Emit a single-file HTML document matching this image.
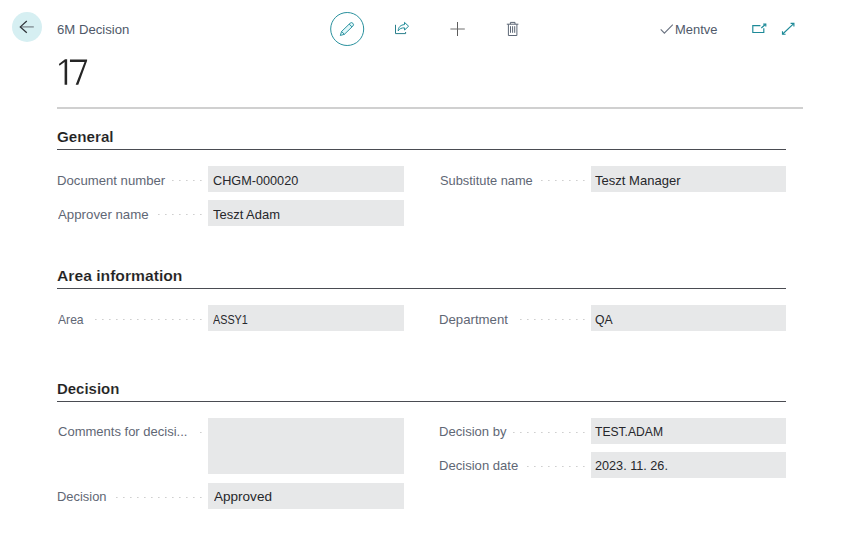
<!DOCTYPE html>
<html>
<head>
<meta charset="utf-8">
<title>6M Decision</title>
<style>
html,body{margin:0;padding:0;background:#fff;}
body{width:859px;height:541px;position:relative;overflow:hidden;font-family:"Liberation Sans",sans-serif;font-size:13px;color:#212121;}
svg{position:absolute;left:0;top:0;}
.t{position:absolute;white-space:nowrap;transform-origin:0 50%;height:26px;line-height:26px;font-size:13px;}
.cap{height:18px;line-height:18px;color:#4f5969;}
.h{height:20px;line-height:20px;font-size:15px;font-weight:bold;color:#1f1f1f;-webkit-text-stroke:0.12px #fff;}
.lab{color:#5f6775;}
.val{color:#26272b;}
.hr{position:absolute;left:57px;top:107px;width:746px;height:2px;background:#d0d0d0;}
.sec{position:absolute;left:57px;width:729px;height:1px;background:#4a4c52;}
.box{position:absolute;background:#e7e8e9;}
.dots{position:absolute;height:1px;background-image:linear-gradient(90deg,#cfcfcf 0,#cfcfcf 1px,#e2e2e2 1px,#e2e2e2 2px,transparent 2px);background-size:7px 1px;background-repeat:repeat-x;}
</style>
</head>
<body>
<svg width="859" height="110" viewBox="0 0 859 110">
  <!-- back button -->
  <circle cx="27" cy="27" r="15" fill="#d6eff2"/>
  <path d="M33.8 26.9 H20.6" stroke="#7f8a90" stroke-width="1.3" fill="none"/>
  <path d="M26.8 21 L20.3 26.9 L26.8 32.8" stroke="#30343a" stroke-width="1.25" fill="none" stroke-linejoin="miter"/>

  <!-- title 17 -->
  <polygon points="65.0,59.2 67.15,59.2 67.15,84.8 64.6,84.8 64.6,62.0 59.5,65.8 58.9,63.9" fill="#252525"/>
  <polygon points="69.95,59.6 87.1,59.6 87.1,60.8 78.3,84.8 75.7,84.8 84.5,61.9 69.95,61.9" fill="#252525"/>

  <!-- edit (pencil in circle) -->
  <circle cx="347.2" cy="29" r="16.5" fill="none" stroke="#1d8a98" stroke-width="0.95"/>
  <g transform="translate(347,29) rotate(-44)" fill="#e0f7fa" stroke="#1d8a98" stroke-width="0.85" stroke-linejoin="round">
    <path d="M-9.3 0 L-5.6 -2 L6.2 -2 A2 2 0 0 1 6.2 2 L-5.6 2 Z"/>
    <path d="M-5.6 -2 L-5.6 2 M5 -2 L5 2" fill="none"/>
  </g>

  <!-- share -->
  <path d="M395.5 24.8 V33.6 H405.6 V32" fill="none" stroke="#2a7f8c" stroke-width="1"/>
  <path d="M404.5 22.4 L408.6 26.2 L404.6 30 L404.6 27.9 C401.4 27.7 399.6 28.7 398.2 30.9 C398.3 27.2 400.5 24.9 404.5 24.6 Z" fill="none" stroke="#1d8a98" stroke-width="1" stroke-linejoin="round"/>

  <!-- plus -->
  <path d="M457.5 22 V36" stroke="#5c5c5c" stroke-width="1" fill="none"/>
  <path d="M450.4 29 H464.8" stroke="#6e6e6e" stroke-width="1" fill="none"/>

  <!-- trash -->
  <g fill="none" stroke="#5d6776" stroke-width="1">
    <path d="M506.8 24.2 H518.4"/>
    <path d="M510.4 24.2 V22.4 H515 V24.2"/>
    <path d="M508.4 24.2 V35.5 H516.9 V24.2"/>
    <path d="M510.5 26.2 V32.8 M512.6 26.2 V32.8 M514.7 26.2 V32.8"/>
  </g>

  <!-- check -->
  <path d="M660.7 29.3 L664.4 33.2 L672.8 24.6" fill="none" stroke="#6a7280" stroke-width="1.1"/>

  <!-- popout -->
  <g fill="none" stroke="#1d8a98" stroke-width="1.15">
    <path d="M760.4 25.6 H752.8 V32.5 H763.8 V28.3"/>
    <path d="M761.3 28 L765.6 24.2"/>
    <path d="M763.2 24.1 H765.8 V26.6"/>
  </g>
  <!-- expand -->
  <g fill="none" stroke="#1d8a98" stroke-width="1.15">
    <path d="M782.7 34 L793.7 23.6"/>
    <path d="M782.5 31.2 V34.2 H785.6"/>
    <path d="M790.6 23.4 H793.9 V26.6"/>
  </g>
</svg>
<div class="hr"></div>
<div class="sec" style="top:149px"></div>
<div class="sec" style="top:288px"></div>
<div class="sec" style="top:401px"></div>
<div class="box" style="left:208px;top:166px;width:196px;height:26px"></div>
<div class="box" style="left:208px;top:200px;width:196px;height:26px"></div>
<div class="box" style="left:591px;top:166px;width:195px;height:26px"></div>
<div class="box" style="left:208px;top:305px;width:196px;height:26px"></div>
<div class="box" style="left:591px;top:305px;width:195px;height:26px"></div>
<div class="box" style="left:208px;top:418px;width:196px;height:56px"></div>
<div class="box" style="left:208px;top:483px;width:196px;height:26px"></div>
<div class="box" style="left:591px;top:418px;width:195px;height:26px"></div>
<div class="box" style="left:591px;top:452px;width:195px;height:26px"></div>
<div class="dots" style="left:172px;top:180px;width:30px"></div>
<div class="dots" style="left:158px;top:214px;width:44px"></div>
<div class="dots" style="left:541px;top:180px;width:44px"></div>
<div class="dots" style="left:95px;top:319px;width:107px"></div>
<div class="dots" style="left:520px;top:319px;width:65px"></div>
<div class="dots" style="left:200px;top:432px;width:2px"></div>
<div class="dots" style="left:116px;top:497px;width:86px"></div>
<div class="dots" style="left:513px;top:432px;width:72px"></div>
<div class="dots" style="left:527px;top:466px;width:58px"></div>
<div id="cap" class="t cap" style="left:56.99px;top:21px;transform:scaleX(1.0107);">6M Decision</div>
<div id="saved" class="t cap" style="left:675.41px;top:21px;transform:scaleX(0.9939);">Mentve</div>
<div id="h1" class="t h" style="left:57.44px;top:127px;transform:scaleX(1.0124);">General</div>
<div id="h2" class="t h" style="left:56.78px;top:266px;transform:scaleX(1.0448);">Area information</div>
<div id="h3" class="t h" style="left:57.05px;top:379px;transform:scaleX(0.9969);">Decision</div>
<div id="l1" class="t lab" style="left:56.59px;top:168px;transform:scaleX(1.0118);">Document number</div>
<div id="l2" class="t lab" style="left:57.60px;top:202px;transform:scaleX(1.0198);">Approver name</div>
<div id="l3" class="t lab" style="left:57.60px;top:307px;transform:scaleX(0.9329);">Area</div>
<div id="l4" class="t lab" style="left:57.60px;top:419px;transform:scaleX(1.0008);">Comments for decisi...</div>
<div id="l5" class="t lab" style="left:56.61px;top:484px;transform:scaleX(0.9932);">Decision</div>
<div id="l6" class="t lab" style="left:440.41px;top:168px;transform:scaleX(0.9874);">Substitute name</div>
<div id="l7" class="t lab" style="left:439.38px;top:307px;transform:scaleX(1.0154);">Department</div>
<div id="l8" class="t lab" style="left:439.39px;top:419px;transform:scaleX(1.0048);">Decision by</div>
<div id="l9" class="t lab" style="left:439.39px;top:453px;transform:scaleX(1.0060);">Decision date</div>
<div id="v1" class="t val" style="left:213.01px;top:168px;transform:scaleX(0.9754);">CHGM-000020</div>
<div id="v2" class="t val" style="left:213.00px;top:202px;transform:scaleX(0.9962);">Teszt Adam</div>
<div id="v3" class="t val" style="left:213.20px;top:307px;transform:scaleX(0.8304);">ASSY1</div>
<div id="v5" class="t val" style="left:213.60px;top:484px;transform:scaleX(1.0410);">Approved</div>
<div id="v6" class="t val" style="left:595.40px;top:168px;transform:scaleX(1.0024);">Teszt Manager</div>
<div id="v7" class="t val" style="left:595.42px;top:307px;transform:scaleX(0.9402);">QA</div>
<div id="v8" class="t val" style="left:595.42px;top:419px;transform:scaleX(0.9317);">TEST.ADAM</div>
<div id="v9" class="t val" style="left:595.41px;top:453px;transform:scaleX(0.9731);">2023. 11. 26.</div>
</body>
</html>
